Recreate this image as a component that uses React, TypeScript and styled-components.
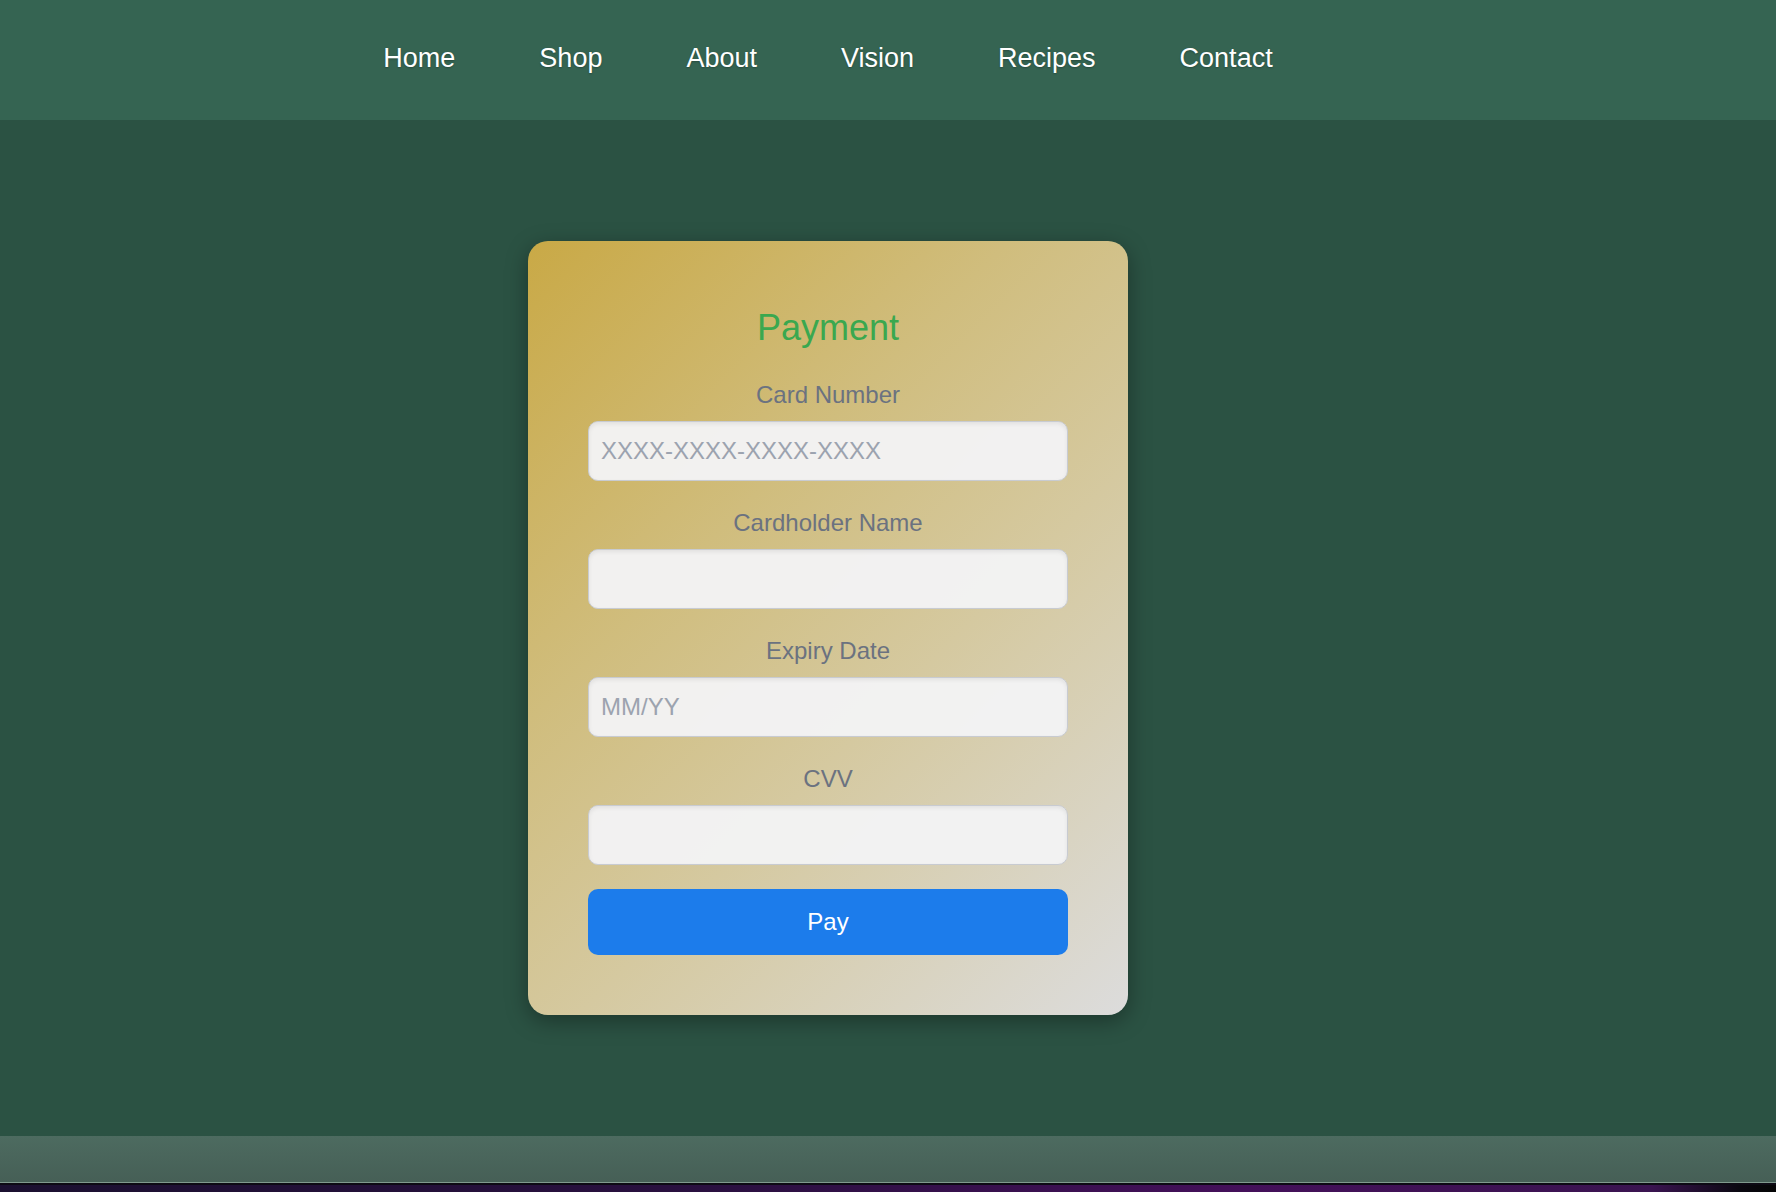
import React from "react";
import styled, { createGlobalStyle } from "styled-components";

const GlobalStyle = createGlobalStyle`
  html, body {
    margin: 0;
    padding: 0;
    background: #2b5243;
    font-family: "Liberation Sans", Arial, Helvetica, sans-serif;
  }
  * { box-sizing: border-box; }
`;

const Page = styled.div`
  display: flex;
  flex-direction: column;
  min-height: 1192px;
  background: #2b5243;
`;

const NavBar = styled.nav`
  height: 120px;
  background: #356452;
  display: flex;
  align-items: center;
  justify-content: center;
  padding-right: 120px;
  padding-bottom: 3px;
`;

const NavList = styled.ul`
  list-style: none;
  margin: 0;
  padding: 0;
  display: flex;
  gap: 84px;
`;

const NavLink = styled.a`
  color: #ffffff;
  font-size: 27px;
  line-height: 31px;
  text-decoration: none;
  text-shadow: 0 1px 2px rgba(0, 0, 0, 0.25);
`;

const Main = styled.main`
  flex: 1;
  display: flex;
  align-items: center;
  justify-content: center;
  padding-right: 120px;
`;

const Card = styled.form`
  width: 600px;
  padding: 60px;
  border-radius: 20px;
  background: linear-gradient(135deg, #c9a946 0%, #d0bd7d 35%, #d5c9a0 60%, #dcdcdc 100%);
  box-shadow: 0 6px 22px rgba(0, 0, 0, 0.35);
  display: flex;
  flex-direction: column;
`;

const Title = styled.h2`
  margin: 6px 0 33px;
  font-size: 36px;
  line-height: 41px;
  font-weight: 400;
  color: #3aa84f;
  text-align: center;
`;

const Field = styled.div`
  display: flex;
  flex-direction: column;
  gap: 12px;
  & + & {
    margin-top: 28px;
  }
`;

const Label = styled.label`
  font-size: 24px;
  line-height: 28px;
  color: #6b7280;
  text-align: center;
`;

const Input = styled.input`
  height: 60px;
  width: 100%;
  padding: 0 12px;
  border: 1px solid #c8cbd1;
  border-radius: 10px;
  background: rgba(243, 243, 244, 0.97);
  box-shadow: inset 0 2px 4px rgba(0, 0, 0, 0.07);
  font-family: "Liberation Sans", Arial, sans-serif;
  font-size: 24px;
  color: #374151;
  outline: none;
  &::placeholder {
    color: #9ca3af;
  }
`;

const PayButton = styled.button`
  margin-top: 24px;
  height: 66px;
  width: 100%;
  border: none;
  border-radius: 10px;
  background: #1c7ceb;
  color: #ffffff;
  font-family: "Liberation Sans", Arial, sans-serif;
  font-size: 24px;
  cursor: pointer;
`;

const Footer = styled.footer`
  height: 47px;
  background: linear-gradient(180deg, #4d6b60 0%, #465f56 100%);
  border-bottom: 1px solid #809a8e;
`;

const BottomStrip = styled.div`
  height: 9px;
  border-top: 2px solid #0d0a14;
  background: linear-gradient(90deg, #1b1030 0%, #2a1040 40%, #44105a 70%, #3a1450 93%, #0a0810 98%, #050505 100%);
`;

const navItems = ["Home", "Shop", "About", "Vision", "Recipes", "Contact"];

const fields = [
  { id: "card", label: "Card Number", placeholder: "XXXX-XXXX-XXXX-XXXX" },
  { id: "name", label: "Cardholder Name", placeholder: "" },
  { id: "expiry", label: "Expiry Date", placeholder: "MM/YY" },
  { id: "cvv", label: "CVV", placeholder: "" },
];

export default function App() {
  return (
    <>
      <GlobalStyle />
      <Page>
        <NavBar>
          <NavList>
            {navItems.map((item) => (
              <li key={item}>
                <NavLink href="#">{item}</NavLink>
              </li>
            ))}
          </NavList>
        </NavBar>
        <Main>
          <Card onSubmit={(e) => e.preventDefault()}>
            <Title>Payment</Title>
            {fields.map((f) => (
              <Field key={f.id}>
                <Label htmlFor={f.id}>{f.label}</Label>
                <Input id={f.id} placeholder={f.placeholder} />
              </Field>
            ))}
            <PayButton type="submit">Pay</PayButton>
          </Card>
        </Main>
        <Footer />
        <BottomStrip />
      </Page>
    </>
  );
}
